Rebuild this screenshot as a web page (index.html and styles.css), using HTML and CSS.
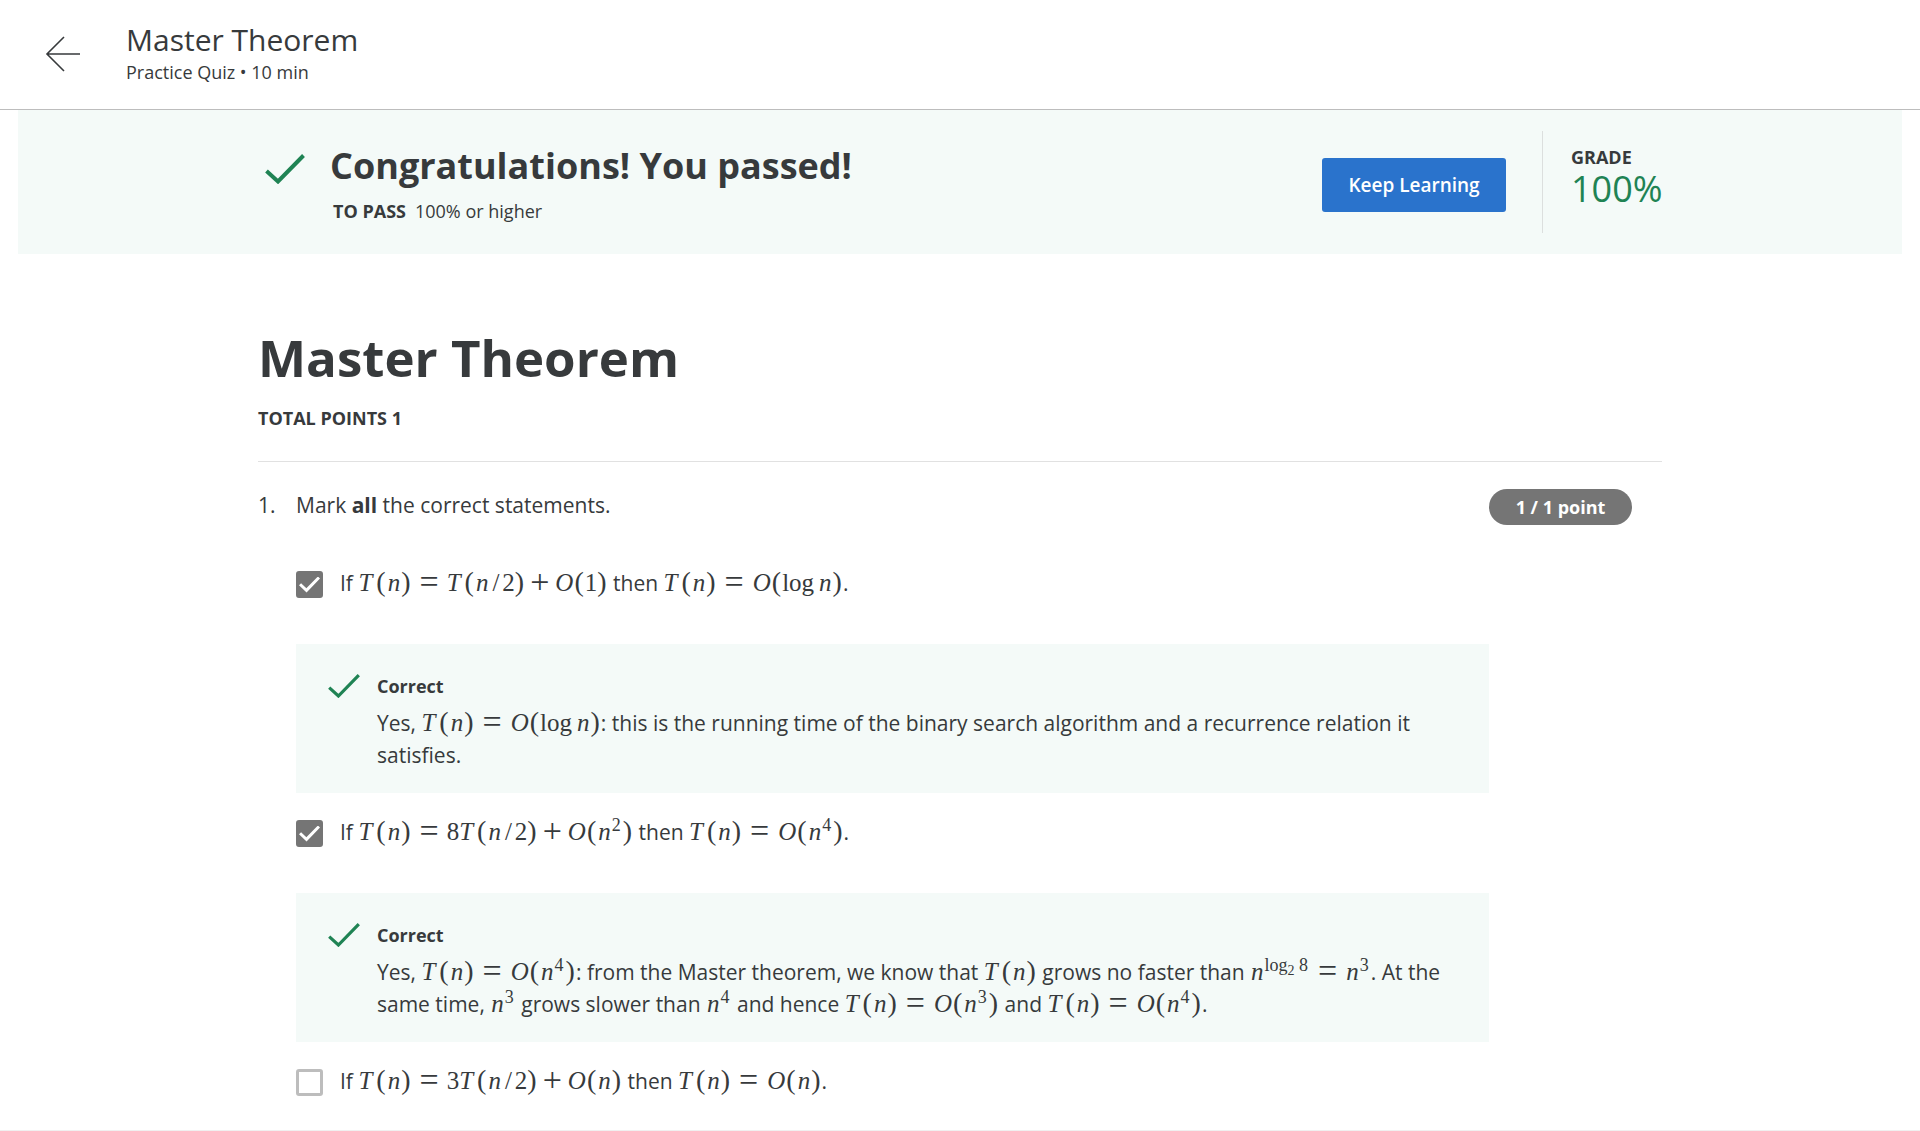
FILE: index.html
```html
<!DOCTYPE html>
<html lang="en">
<head>
<meta charset="utf-8">
<meta name="viewport" content="width=device-width, initial-scale=1">
<title>Master Theorem</title>
<link rel="stylesheet" href="styles.css">
</head>
<body>
<header class="topbar">
  <a class="back" href="#" aria-label="Back">
    <svg width="36" height="36" viewBox="0 0 36 36" fill="none" stroke="#373a3c" stroke-width="1.600"><path d="M35 18H2M19 1L2 18l17 17"/></svg>
  </a>
  <div class="topbar-text">
    <div class="topbar-title">Master Theorem</div>
    <div class="topbar-meta">Practice Quiz • 10 min</div>
  </div>
</header>

<section class="banner">
  <div class="container banner-row">
    <svg class="banner-check" width="40" height="30" viewBox="0 0 40 30" fill="none" stroke="#1f8354" stroke-width="4"><path d="M1.500 17L13 27.500L38.500 1.500"/></svg>
    <div class="banner-text">
      <h2 class="banner-title">Congratulations! You passed!</h2>
      <p class="banner-sub"><strong>TO PASS</strong><span>100% or higher</span></p>
    </div>
    <button class="keep" type="button">Keep Learning</button>
    <div class="grade">
      <div class="grade-label">GRADE</div>
      <div class="grade-value">100%</div>
    </div>
  </div>
</section>

<main class="container quiz">
  <h1 class="quiz-title">Master Theorem</h1>
  <p class="points-total">TOTAL POINTS 1</p>

  <div class="question">
    <div class="number">1.</div>
    <div class="body">
      <p class="prompt">Mark <b>all</b> the correct statements.</p>

      <label class="option">
        <input type="checkbox" checked>
        <span>If <span class="math"><i class="t">T</i><span class="p">(</span><i>n</i><span class="p">)</span><span class="rel">=</span><i class="t">T</i><span class="p">(</span><i>n</i><span class="sl">/</span>2<span class="p">)</span><span class="bin">+</span><i>O</i><span class="p">(</span>1<span class="p">)</span></span> then <span class="math"><i class="t">T</i><span class="p">(</span><i>n</i><span class="p">)</span><span class="rel">=</span><i>O</i><span class="p">(</span><span class="op">log</span><i>n</i><span class="p">)</span></span>.</span>
      </label>
      <div class="feedback">
        <svg width="32" height="24" viewBox="0 0 40 30" fill="none" stroke="#1f8354" stroke-width="4"><path d="M1.500 17L13 27.500L38.500 1.500"/></svg>
        <div>
          <h3 class="verdict">Correct</h3>
          <p class="explain">Yes, <span class="math"><i class="t">T</i><span class="p">(</span><i>n</i><span class="p">)</span><span class="rel">=</span><i>O</i><span class="p">(</span><span class="op">log</span><i>n</i><span class="p">)</span></span>: this is the running time of the binary search algorithm and a recurrence relation it satisfies.</p>
        </div>
      </div>

      <label class="option">
        <input type="checkbox" checked>
        <span>If <span class="math"><i class="t">T</i><span class="p">(</span><i>n</i><span class="p">)</span><span class="rel">=</span>8<i class="t">T</i><span class="p">(</span><i>n</i><span class="sl">/</span>2<span class="p">)</span><span class="bin">+</span><i>O</i><span class="p">(</span><i>n</i><sup>2</sup><span class="p">)</span></span> then <span class="math"><i class="t">T</i><span class="p">(</span><i>n</i><span class="p">)</span><span class="rel">=</span><i>O</i><span class="p">(</span><i>n</i><sup>4</sup><span class="p">)</span></span>.</span>
      </label>
      <div class="feedback">
        <svg width="32" height="24" viewBox="0 0 40 30" fill="none" stroke="#1f8354" stroke-width="4"><path d="M1.500 17L13 27.500L38.500 1.500"/></svg>
        <div>
          <h3 class="verdict">Correct</h3>
          <p class="explain">Yes, <span class="math"><i class="t">T</i><span class="p">(</span><i>n</i><span class="p">)</span><span class="rel">=</span><i>O</i><span class="p">(</span><i>n</i><sup>4</sup><span class="p">)</span></span>: from the Master theorem, we know that <span class="math"><i class="t">T</i><span class="p">(</span><i>n</i><span class="p">)</span></span> grows no faster than <span class="math"><i>n</i><sup>log<sub>2</sub> 8</sup><span class="rel">=</span><i>n</i><sup>3</sup></span>. At the same time, <span class="math"><i>n</i><sup>3</sup></span> grows slower than <span class="math"><i>n</i><sup>4</sup></span> and hence <span class="math"><i class="t">T</i><span class="p">(</span><i>n</i><span class="p">)</span><span class="rel">=</span><i>O</i><span class="p">(</span><i>n</i><sup>3</sup><span class="p">)</span></span> and <span class="math"><i class="t">T</i><span class="p">(</span><i>n</i><span class="p">)</span><span class="rel">=</span><i>O</i><span class="p">(</span><i>n</i><sup>4</sup><span class="p">)</span></span>.</p>
        </div>
      </div>

      <label class="option">
        <input type="checkbox">
        <span>If <span class="math"><i class="t">T</i><span class="p">(</span><i>n</i><span class="p">)</span><span class="rel">=</span>3<i class="t">T</i><span class="p">(</span><i>n</i><span class="sl">/</span>2<span class="p">)</span><span class="bin">+</span><i>O</i><span class="p">(</span><i>n</i><span class="p">)</span></span> then <span class="math"><i class="t">T</i><span class="p">(</span><i>n</i><span class="p">)</span><span class="rel">=</span><i>O</i><span class="p">(</span><i>n</i><span class="p">)</span></span>.</span>
      </label>
    </div>
    <div class="score-col"><span class="score">1 / 1 point</span></div>
  </div>
</main>
<footer class="page-end"></footer>
</body>
</html>
```
FILE: styles.css
```css
* {
  box-sizing: border-box;
}

body {
  margin: 0;
  background: #fff;
  color: #373a3c;
  font-family: "Open Sans", sans-serif;
  font-size: 21px;
  line-height: 32px;
}

h1, h2, h3, p {
  margin: 0;
}

.topbar {
  display: flex;
  align-items: center;
  gap: 45px;
  height: 110px;
  padding: 0 45px 2px;
  border-bottom: 1px solid #bdbdbd;
}

.back {
  display: flex;
}

.topbar-title {
  font-size: 30px;
  line-height: 36px;
}

.topbar-meta {
  font-size: 18px;
  line-height: 28px;
}

.container {
  width: 100%;
  max-width: 1404px;
  margin: 0 auto;
}

.banner {
  margin: 0 18px;
  padding: 21px 0;
  background: #f4faf8;
}

.banner-row {
  display: flex;
  align-items: flex-start;
}

.banner-check {
  flex: none;
  margin: 23px 25px 0 7px;
}

.banner-text {
  flex: 1;
  padding-top: 11px;
}

.banner-title {
  font-size: 36px;
  font-weight: 700;
  line-height: 48px;
}

.banner-sub {
  display: flex;
  gap: 9px;
  padding: 5px 3px 0;
  font-size: 18px;
  line-height: 32px;
}

.banner-sub strong {
  font-weight: 700;
}

.keep {
  width: 184px;
  height: 54px;
  margin: 27px 36px 0 0;
  padding: 0;
  border: 0;
  border-radius: 3px;
  background: #2a73cc;
  color: #fff;
  font: 600 19px/28px "Open Sans", sans-serif;
}

.grade {
  width: 120px;
  height: 102px;
  padding: 12px 0 0 28px;
  border-left: 1px solid #dcdfde;
}

.grade-label {
  font-size: 18px;
  font-weight: 700;
  line-height: 28px;
}

.grade-value {
  color: #1f8354;
  font-size: 36px;
  line-height: 36px;
}

.quiz {
  padding-top: 67px;
}

.quiz-title {
  font-size: 51px;
  font-weight: 700;
  line-height: 72px;
}

.points-total {
  padding: 9px 0 27px;
  border-bottom: 1px solid #e1e1e1;
  font-size: 18px;
  font-weight: 700;
  line-height: 32px;
}

.question {
  display: flex;
  padding-top: 27px;
}

.number {
  width: 38px;
}

.body {
  flex: 1;
}

.score-col {
  width: 173px;
}

.score {
  display: inline-block;
  width: 143px;
  border-radius: 18px;
  background: #757575;
  color: #fff;
  font-size: 18px;
  font-weight: 700;
  line-height: 36px;
  text-align: center;
}

.option {
  display: flex;
  align-items: flex-start;
  gap: 17px;
  height: 100px;
  padding-top: 23px;
}

.prompt {
  padding-bottom: 23px;
}

.option input {
  display: grid;
  flex: none;
  place-items: center;
  width: 27px;
  height: 27px;
  margin: 4px 0 0;
  border: 3px solid #bdbdbd;
  border-radius: 3px;
  appearance: none;
  background: #fff;
}

.option input:checked {
  border-color: #757575;
  background: #757575;
}

.option input:checked::before {
  width: 21px;
  height: 16px;
  background: #fff;
  clip-path: polygon(0 55%, 10% 42%, 35% 74%, 90% 0, 100% 12%, 36% 100%);
  content: "";
}

.feedback {
  display: flex;
  gap: 17px;
  padding: 24px 32px 22px;
  background: #f4faf8;
}

.feedback svg {
  flex: none;
  margin-top: 6px;
}

.verdict {
  margin-bottom: 3px;
  font-size: 18px;
  font-weight: 700;
  line-height: 36px;
}

.math {
  font-family: "Liberation Serif", serif;
  font-size: 25px;
  line-height: 28px;
  white-space: nowrap;
}

.math i {
  margin: 0 1px;
}

.math .t {
  margin: 0 4px 0 0;
}

.math .p {
  margin-right: 1px;
  font-size: 28px;
}

.math .sl {
  margin: 0 3px;
}

.math .rel,
.math .bin {
  margin: 0 8px;
  font-size: 34px;
  line-height: 20px;
  vertical-align: -2px;
}

.math .bin {
  margin: 0 5px;
}

.math .op {
  margin-right: 4px;
}

.math sup {
  margin-right: 2px;
  font-size: 18px;
  line-height: 16px;
  vertical-align: 9px;
}

.math sub {
  font-size: 14px;
  line-height: 12px;
  vertical-align: -4px;
}

.page-end {
  margin-top: -12px;
  border-top: 1px solid #f0f0f0;
}
```
